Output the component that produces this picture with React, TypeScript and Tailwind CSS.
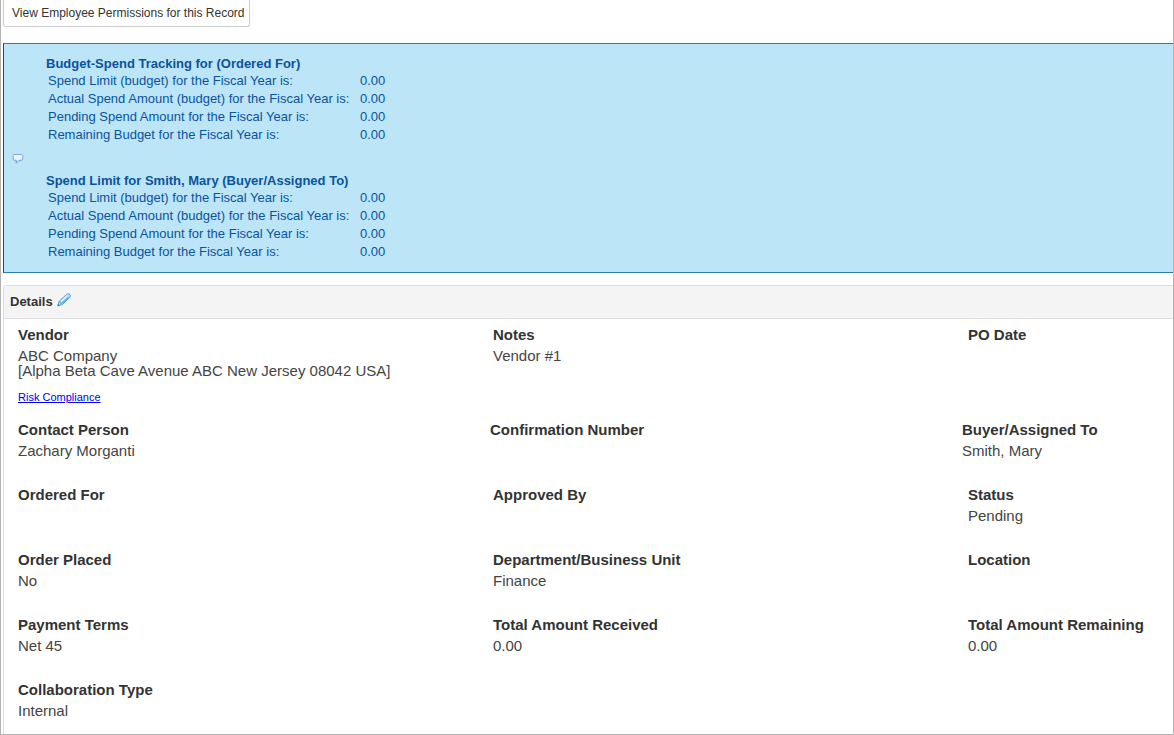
import type { ReactNode } from "react";

type BudgetRow = { label: string; amount: string };

const budgetRows: BudgetRow[] = [
  { label: "Spend Limit (budget) for the Fiscal Year is:", amount: "0.00" },
  { label: "Actual Spend Amount (budget) for the Fiscal Year is:", amount: "0.00" },
  { label: "Pending Spend Amount for the Fiscal Year is:", amount: "0.00" },
  { label: "Remaining Budget for the Fiscal Year is:", amount: "0.00" },
];

function CommentIcon() {
  return (
    <svg width="12" height="11" viewBox="0 0 12 11" aria-hidden="true">
      <path
        d="M2 1.500h7.500q1.200 0 1.200 1V6q0 1.200-1.200 1.200H7L4.500 9.800V7.200H2.500Q1.200 7.200 1.200 6V2.500q0-1 .8-1z"
        fill="#e9f4ff"
        stroke="#86a9d6"
      />
      <path d="M3 9.800h2.500M2 7.700h2M7 7.700h2.500" stroke="#7d9cc0" strokeWidth="0.6" />
    </svg>
  );
}

function PencilIcon() {
  return (
    <svg width="16" height="16" viewBox="0 0 16 16" aria-hidden="true">
      <path
        d="M1.800 13.800l1.400-4.600 7.600-7q1.500-1 3.100.2 1.200 1.500 0 3l-7.600 7.200z"
        fill="#a9d8f5"
        stroke="#5aa0d0"
      />
      <path d="M5 9.500l7-6.300" stroke="#e4f4fe" strokeWidth="1.2" />
      <path d="M6 11.200l6.500-6" stroke="#5fa9da" strokeWidth="1.2" />
      <path d="M3.200 9.400l3 3" stroke="#5aa0d0" />
      <path d="M1.500 14.200l.7-2.300 1.600 1.600z" fill="#2f76ad" />
    </svg>
  );
}

function BudgetBlock({ title, rows }: { title: string; rows: BudgetRow[] }) {
  return (
    <section>
      <h2 className="text-[13px] leading-[17px] font-bold">{title}</h2>
      <table className="ml-0.5 text-[13px] leading-[18px]">
        <tbody>
          {rows.map((row) => (
            <tr key={row.label}>
              <th scope="row" className="w-78 p-0 text-left font-normal whitespace-nowrap">
                {row.label}
              </th>
              <td className="p-0">{row.amount}</td>
            </tr>
          ))}
        </tbody>
      </table>
    </section>
  );
}

function Field({ label, children }: { label: string; children?: ReactNode }) {
  return (
    <div>
      <dt className="text-[15px] leading-5 font-bold text-[#333]">{label}</dt>
      <dd className="pt-[3px] text-[15px] leading-[15px] text-[#444]">{children}</dd>
    </div>
  );
}

export default function App() {
  return (
    <main className="flex min-h-screen flex-col overflow-hidden border-x border-b border-[#b3b3b3] bg-white pl-0.5 font-['Liberation_Sans',Arial,sans-serif]">
      <div>
        <button
          type="button"
          className="rounded-b-[3px] border border-t-0 border-[#ccc] py-1 pr-1 pl-2 text-[12px] leading-[18px] text-[#333]"
        >
          View Employee Permissions for this Record
        </button>
      </div>

      <div className="mt-4 flex items-center border border-r-0 border-[#2f79b5] border-l-[#0a4f94] bg-[#bce5f7] py-[11px] text-[#0b539b]">
        <div className="w-[42px] pl-2">
          <CommentIcon />
        </div>
        <div className="flex flex-col gap-7">
          <BudgetBlock title="Budget-Spend Tracking for (Ordered For)" rows={budgetRows} />
          <BudgetBlock title="Spend Limit for Smith, Mary (Buyer/Assigned To)" rows={budgetRows} />
        </div>
      </div>

      <section className="mt-3 flex grow flex-col rounded-tl-[3px] border-t border-l border-[#ddd]">
        <header className="flex h-[33px] items-center gap-[3px] border-b border-[#ddd] bg-[#f4f4f4] pl-1.5">
          <h2 className="text-[13px] font-bold text-[#333]">Details</h2>
          <button type="button" aria-label="Edit details" className="pb-1">
            <PencilIcon />
          </button>
        </header>

        <dl className="flex flex-col pt-1.5 pl-3.5">
          <div className="grid min-h-[95px] grid-cols-[475fr_475fr_205fr]">
            <Field label="Vendor">
              ABC Company
              <br />
              [Alpha Beta Cave Avenue ABC New Jersey 08042 USA]
              <a href="#risk" className="mt-3 block text-[11px] text-[#0000ee] underline">
                Risk Compliance
              </a>
            </Field>
            <Field label="Notes">Vendor #1</Field>
            <Field label="PO Date" />
          </div>
          <div className="grid min-h-[65px] grid-cols-[472fr_472fr_211fr]">
            <Field label="Contact Person">Zachary Morganti</Field>
            <Field label="Confirmation Number" />
            <Field label="Buyer/Assigned To">Smith, Mary</Field>
          </div>
          <div className="grid min-h-[65px] grid-cols-[475fr_475fr_205fr]">
            <Field label="Ordered For" />
            <Field label="Approved By" />
            <Field label="Status">Pending</Field>
          </div>
          <div className="grid min-h-[65px] grid-cols-[475fr_475fr_205fr]">
            <Field label="Order Placed">No</Field>
            <Field label="Department/Business Unit">Finance</Field>
            <Field label="Location" />
          </div>
          <div className="grid min-h-[65px] grid-cols-[475fr_475fr_205fr]">
            <Field label="Payment Terms">Net 45</Field>
            <Field label="Total Amount Received">0.00</Field>
            <Field label="Total Amount Remaining">0.00</Field>
          </div>
          <div>
            <Field label="Collaboration Type">Internal</Field>
          </div>
        </dl>
      </section>
    </main>
  );
}
